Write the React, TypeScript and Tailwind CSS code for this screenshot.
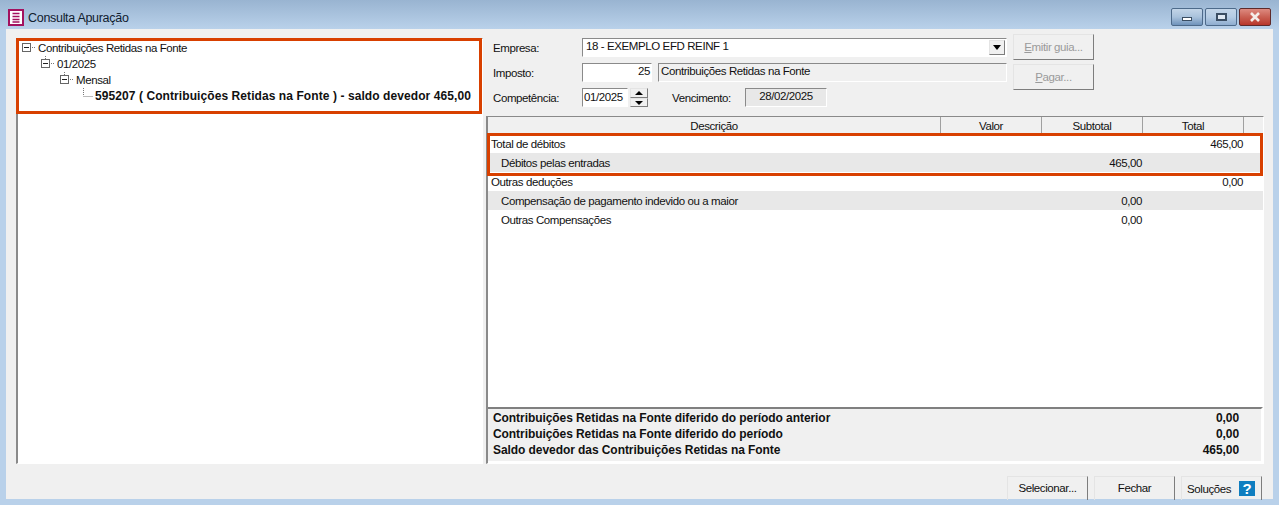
import React from "react";

const sunken = "border border-t-[#8a8a8a] border-l-[#8a8a8a] border-r-white border-b-white";
const raised = "border border-t-[#e4e4e4] border-l-[#e4e4e4] border-r-[#7d7d7d] border-b-[#7d7d7d]";
const font = "font-['Liberation_Sans',sans-serif] text-[11.5px] leading-[14px] tracking-[-0.4px] text-[#111]";

function Row({ label, sub, total, grey, indent }: { label: string; sub?: string; total?: string; grey?: boolean; indent?: boolean }) {
  return (
    <div className={`flex h-[19px] items-center ${grey ? "bg-[#e8e8e8]" : "bg-white"}`}>
      <div className={`flex-1 ${indent ? "pl-[13px]" : "pl-[3px]"}`}>{label}</div>
      <div className="w-[101px] pr-[1px] text-right">{sub}</div>
      <div className="w-[101px] pr-[1px] text-right">{total}</div>
      <div className="w-[19px]" />
    </div>
  );
}

function TreeBox({ child }: { child?: boolean }) {
  return (
    <svg width="14" height="16" viewBox="0 0 14 16" className="mr-[2px] shrink-0">
      {child && <path d="M4.5 0v3" stroke="#777" strokeDasharray="1 1" />}
      <rect x="0.5" y="3.5" width="8" height="8" fill="#fff" stroke="#666" />
      <path d="M2 7.5h5" stroke="#222" />
      <path d="M10 7.5h1M12 7.5h1" stroke="#777" />
    </svg>
  );
}

function SumRow({ label, value }: { label: string; value: string }) {
  return (
    <div className="flex h-[16px] items-center justify-between pl-[5px] pr-[22px] text-[12px] font-bold tracking-[-0.07px]">
      <span>{label}</span>
      <span>{value}</span>
    </div>
  );
}

export default function App() {
  return (
    <div className={`relative flex h-[505px] w-[1279px] flex-col overflow-hidden bg-[#b9d1ea] ${font}`}>
      <div className="flex h-[29px] shrink-0 items-center bg-gradient-to-b from-[#99b4d1] to-[#b9d1ea] pl-[8px] pr-[8px] pt-[5px]">
        <svg width="16" height="17" viewBox="0 0 16 17" className="mr-[4px]">
          <rect x="1" y="1" width="14" height="15" fill="#fff" stroke="#a3125f" strokeWidth="2" />
          <path d="M4.5 4.5h7M4.5 7.5h7M4.5 10.5h7M4.5 13h7" stroke="#a3125f" strokeWidth="1.3" />
        </svg>
        <span className="pt-[1px] text-[12.5px] tracking-[-0.3px] text-[#10202f]">Consulta Apuração</span>
        <div className="ml-auto flex gap-[2px]">
          <div className="flex h-[18px] w-[32px] items-center justify-center rounded-[2px] border border-[#4d6a8a] bg-gradient-to-b from-[#c3d5e8] via-[#a9c2dc] to-[#6f93bb]">
            <div className="mt-[3px] h-[4px] w-[10px] border border-[#3a4d62] bg-white" />
          </div>
          <div className="flex h-[18px] w-[32px] items-center justify-center rounded-[2px] border border-[#4d6a8a] bg-gradient-to-b from-[#c3d5e8] via-[#b4cbe3] to-[#8fadcf]">
            <div className="h-[8px] w-[11px] border-2 border-[#3a4d62] bg-[#dfe8f2]" />
          </div>
          <div className="flex h-[18px] w-[32px] items-center justify-center rounded-[2px] border border-[#5e2a2a] bg-gradient-to-b from-[#dd8a80] via-[#c95f52] to-[#b8352a]">
            <svg width="12" height="10" viewBox="0 0 12 10"><path d="M2 1l8 8M10 1l-8 8" stroke="#f4ece8" strokeWidth="2.6" /></svg>
          </div>
        </div>
      </div>

      <div className="mx-[6px] mb-[6px] flex min-h-0 flex-1 flex-col bg-[#f0f0f0] pl-[10px] pr-[10px] pt-[9px]">
        <div className="flex h-[426px] shrink-0">
          <div className={`w-[467px] shrink-0 bg-white ${sunken} border-l-2 pl-[4px] pt-[1px]`}>
            <div className="flex h-[16px] items-center"><TreeBox /><span>Contribuições Retidas na Fonte</span></div>
            <div className="flex h-[16px] items-center pl-[19px]"><TreeBox child /><span>01/2025</span></div>
            <div className="flex h-[16px] items-center pl-[38px]"><TreeBox child /><span>Mensal</span></div>
            <div className="flex h-[16px] items-center pl-[60px]">
              <svg width="13" height="16" viewBox="0 0 13 16" className="shrink-0"><path d="M1.5 0v8M1.5 8.5h10" stroke="#777" strokeDasharray="1 1" /></svg>
              <span className="text-[12px] font-bold tracking-[0.08px]">595207 ( Contribuições Retidas na Fonte ) - saldo devedor 465,00</span>
            </div>
          </div>

          <div className="ml-[4px] flex min-w-0 flex-1 flex-col">
            <div className="flex h-[78px] shrink-0">
              <div className="w-[95px] shrink-0 pl-[6px]">
                <div className="flex h-[19px] items-center">Empresa:</div>
                <div className="mt-[6px] flex h-[19px] items-center">Imposto:</div>
                <div className="mt-[6px] flex h-[19px] items-center">Competência:</div>
              </div>
              <div className="w-[425px] shrink-0">
                <div className={`flex h-[19px] items-center bg-white pl-[3px] pr-[1px] ${sunken}`}>
                  <span className="pb-[3px]">18 - EXEMPLO EFD REINF 1</span>
                  <div className={`ml-auto flex h-[15px] w-[16px] items-center justify-center bg-[#f0f0f0] ${raised}`}>
                    <svg width="8" height="5" viewBox="0 0 8 5"><path d="M0 0h8L4 5z" fill="#000" /></svg>
                  </div>
                </div>
                <div className="mt-[6px] flex gap-[6px]">
                  <div className={`flex h-[19px] w-[70px] items-center justify-end bg-white pb-[3px] pr-[1px] ${sunken}`}>25</div>
                  <div className={`flex h-[19px] flex-1 items-center pb-[3px] pl-[2px] ${sunken}`}>Contribuições Retidas na Fonte</div>
                </div>
                <div className="mt-[6px] flex h-[19px]">
                  <div className={`flex w-[46px] items-center bg-white pb-[2px] pl-[1px] ${sunken}`}>01/2025</div>
                  <div className="ml-[2px] flex w-[18px] flex-col">
                    <div className={`flex h-[10px] items-center justify-center ${raised}`}><svg width="8" height="4" viewBox="0 0 8 4"><path d="M0 4h8L4 0z" fill="#000" /></svg></div>
                    <div className={`flex h-[9px] items-center justify-center ${raised}`}><svg width="8" height="4" viewBox="0 0 8 4"><path d="M0 0h8L4 4z" fill="#000" /></svg></div>
                  </div>
                  <div className="ml-[24px] flex w-[73px] items-center">Vencimento:</div>
                  <div className={`flex w-[82px] items-start justify-center bg-[#e8e8e8] ${sunken}`}>28/02/2025</div>
                </div>
              </div>
              <div className="-mt-[4px] ml-[6px] flex w-[81px] shrink-0 flex-col gap-[4px] text-[#9a9a9a]">
                <div className={`flex h-[26px] items-center justify-center ${raised}`}><span><u>E</u>mitir guia...</span></div>
                <div className={`flex h-[26px] items-center justify-center ${raised}`}><span><u>P</u>agar...</span></div>
              </div>
            </div>

            <div className={`-mx-px flex min-h-0 flex-1 flex-col bg-white ${sunken} border-l-2`}>
              <div className="flex h-[17px] shrink-0 items-center border-b border-[#bdbdbd] bg-[#f0f0f0] text-center">
                <div className="flex h-full flex-1 items-center justify-center border-r border-[#a0a0a0] pt-[1px]">Descrição</div>
                <div className="flex h-full w-[101px] items-center justify-center border-r border-[#a0a0a0] pt-[1px]">Valor</div>
                <div className="flex h-full w-[101px] items-center justify-center border-r border-[#a0a0a0] pt-[1px]">Subtotal</div>
                <div className="flex h-full w-[101px] items-center justify-center border-r border-[#a0a0a0] pt-[1px]">Total</div>
                <div className="w-[19px]" />
              </div>
              <Row label="Total de débitos" total="465,00" />
              <Row label="Débitos pelas entradas" sub="465,00" grey indent />
              <Row label="Outras deduções" total="0,00" />
              <Row label="Compensação de pagamento indevido ou a maior" sub="0,00" grey indent />
              <Row label="Outras Compensações" sub="0,00" indent />
              <div className="flex-1" />
              <div className="h-[56px] shrink-0 border-t-2 border-r-2 border-b-2 border-t-[#808080] border-r-white border-b-white bg-[#f0f0f0] pt-[1px]">
                <SumRow label="Contribuições Retidas na Fonte diferido do período anterior" value="0,00" />
                <SumRow label="Contribuições Retidas na Fonte diferido do período" value="0,00" />
                <SumRow label="Saldo devedor das Contribuições Retidas na Fonte" value="465,00" />
              </div>
            </div>
          </div>
        </div>

        <div className="mt-[12px] flex justify-end gap-[6px] pr-[1px]">
          <div className={`flex h-[24px] w-[81px] items-center justify-center pb-[2px] ${raised} border-b-0`}>Selecionar...</div>
          <div className={`flex h-[24px] w-[81px] items-center justify-center pb-[2px] ${raised} border-b-0`}>Fechar</div>
          <div className={`flex h-[24px] w-[81px] items-center justify-between pl-[5px] pr-[6px] ${raised} border-b-0`}>
            <span>Soluções</span>
            <span className="flex h-[15px] w-[16px] items-center justify-center bg-[#0f7ec0] text-[15px] font-bold text-white">?</span>
          </div>
        </div>
      </div>

      <div className="pointer-events-none absolute left-[16px] top-[38px] h-[76px] w-[466px] border-[3px] border-[#d84000]" />
      <div className="pointer-events-none absolute left-[487px] top-[133px] h-[43px] w-[776px] border-[3px] border-[#d84000]" />
    </div>
  );
}
